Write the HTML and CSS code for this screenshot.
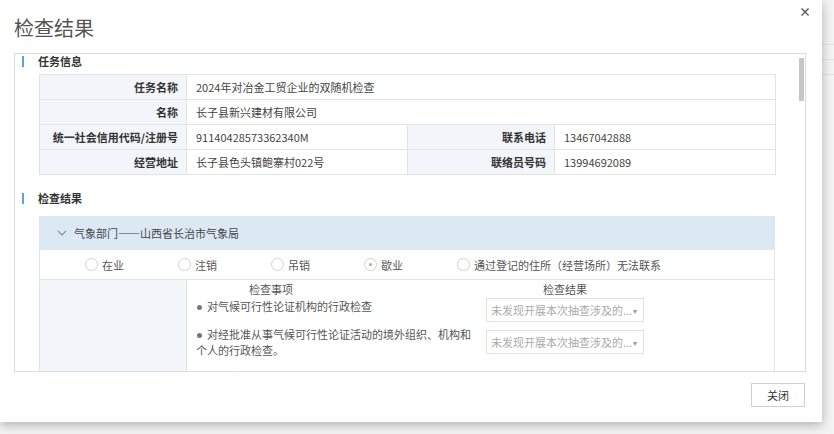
FILE: index.html
```html
<!DOCTYPE html>
<html lang="zh-CN">
  <head>
    <meta charset="UTF-8" />
    <meta name="viewport" content="width=device-width, initial-scale=1.0" />
    <title>检查结果</title>
    <link rel="stylesheet" href="styles.css">
  </head>
  <body>
    <div class="page-bg">
      <div class="bg-line"></div>
      <div class="bg-line"></div>
      <div class="bg-line"></div>
    </div>
    <div class="modal">
      <div class="modal-head">
        <h1 class="modal-title">检查结果</h1>
        <span class="modal-close">×</span>
      </div>
      <div class="modal-body">
        <div class="scroll-thumb"></div>
        <div class="section-title"><i class="bar"></i>任务信息</div>
        <table class="info">
          <colgroup>
            <col class="c-label" /><col class="c-value" /><col class="c-label" /><col class="c-value" />
          </colgroup>
          <tr>
            <th>任务名称</th>
            <td colspan="3">2024年对冶金工贸企业的双随机检查</td>
          </tr>
          <tr>
            <th>名称</th>
            <td colspan="3">长子县新兴建材有限公司</td>
          </tr>
          <tr>
            <th>统一社会信用代码/注册号</th>
            <td>91140428573362340M</td>
            <th>联系电话</th>
            <td>13467042888</td>
          </tr>
          <tr>
            <th>经营地址</th>
            <td>长子县色头镇鲍寨村022号</td>
            <th>联络员号码</th>
            <td>13994692089</td>
          </tr>
        </table>

        <div class="section-title second"><i class="bar"></i>检查结果</div>
        <div class="panel">
          <div class="panel-head">
            <svg class="chevron" width="10" height="6" viewBox="0 0 10 6"><path d="M1 1 L5 5 L9 1" fill="none" stroke="#8a8a8a" stroke-width="1.1"/></svg>
            <span>气象部门——山西省长治市气象局</span>
          </div>
          <div class="radios">
            <label class="radio"><i class="dot"></i>在业</label>
            <label class="radio"><i class="dot"></i>注销</label>
            <label class="radio"><i class="dot"></i>吊销</label>
            <label class="radio checked"><i class="dot"></i>歇业</label>
            <label class="radio"><i class="dot"></i>通过登记的住所（经营场所）无法联系</label>
          </div>
          <div class="check-row">
            <div class="check-label"></div>
            <div class="check-grid">
              <div class="col-head item-head">检查事项</div>
              <div class="col-head result-head">检查结果</div>
              <div class="item first"><i class="bullet"></i>对气候可行性论证机构的行政检查</div>
              <div class="select first"><span>未发现开展本次抽查涉及的...</span><b>▾</b></div>
              <div class="item"><i class="bullet"></i>对经批准从事气候可行性论证活动的境外组织、机构和个人的行政检查。</div>
              <div class="select"><span>未发现开展本次抽查涉及的...</span><b>▾</b></div>
            </div>
          </div>
        </div>
      </div>
      <div class="modal-foot">
        <button class="btn">关闭</button>
      </div>
    </div>
  </body>
</html>
```

FILE: styles.css
```css
* {
  margin: 0;
  padding: 0;
  box-sizing: border-box;
}

body {
  width: 834px;
  height: 434px;
  overflow: hidden;
  background-color: #f3f3f3;
  font-family: 'Noto Sans CJK SC', 'Microsoft Yahei', sans-serif;
  font-size: 11px;
  color: #444;
  position: relative;
}

/* 背后页面的一点残影 */
.page-bg {
  position: absolute;
  top: 0;
  right: 0;
  width: 12px;
  height: 434px;
  padding-top: 44px;
  display: flex;
  flex-direction: column;
  gap: 14px;
}

.bg-line {
  height: 1px;
  background-color: #e2e2e2;
}

.modal {
  position: relative;
  width: 822px;
  height: 422px;
  background-color: #fff;
  box-shadow: 0 3px 10px rgba(0, 0, 0, 0.28);
  display: flex;
  flex-direction: column;
}

.modal-head {
  height: 53px;
  display: flex;
  justify-content: space-between;
  align-items: flex-start;
  padding: 0 11px 0 14px;
}

.modal-title {
  margin-top: 15px;
  font-size: 20px;
  line-height: 26px;
  font-weight: normal;
  color: #555;
}

.modal-close {
  margin-top: 5px;
  font-size: 12px;
  line-height: 14px;
  font-weight: bold;
  color: #555;
}

.modal-body {
  position: relative;
  margin: 0 16px 0 14px;
  height: 319px;
  border: 1px solid #dcdcdc;
  overflow: hidden;
  padding: 0 30px 0 24px;
}

.scroll-thumb {
  position: absolute;
  right: 1px;
  top: 4px;
  width: 5px;
  height: 43px;
  background-color: #c6c6c6;
}

.section-title {
  display: flex;
  align-items: center;
  margin-left: -24px;
  height: 14px;
  line-height: 14px;
  margin-top: 0;
  margin-bottom: 6px;
  font-weight: bold;
  color: #333;
}

.section-title.second {
  margin-top: 16px;
  margin-bottom: 11px;
}

.bar {
  display: block;
  width: 2px;
  height: 11px;
  margin: 0 14px 0 7px;
  background-color: #5d9fe0;
}

.info {
  width: 736px;
  border-collapse: collapse;
  table-layout: fixed;
}

.c-label {
  width: 147px;
}

.c-value {
  width: 221px;
}

.info th,
.info td {
  height: 25px;
  border: 1px solid #e3e3e3;
  white-space: nowrap;
}

.info th {
  text-align: right;
  padding-right: 8px;
  background-color: #f2f5f9;
  color: #333;
}

.info td {
  padding-left: 9px;
  color: #444;
  font-weight: normal;
}

.panel {
  width: 736px;
  border: 1px solid #e3e3e3;
  border-top: none;
}

.panel-head {
  height: 34px;
  display: flex;
  align-items: center;
  margin: 0 -1px;
  padding-left: 18px;
  background-color: #dde8f5;
  color: #444;
}

.chevron {
  margin-right: 7px;
}

.radios {
  height: 30px;
  display: flex;
  align-items: center;
  padding-left: 45px;
  border-bottom: 1px solid #e3e3e3;
  color: #555;
}

.radio {
  width: 93px;
  display: flex;
  align-items: center;
}

.radio:last-child {
  width: auto;
}

.dot {
  width: 13px;
  height: 13px;
  margin-right: 4px;
  border: 1px solid #d3d3d3;
  border-radius: 50%;
  background-color: #fff;
  display: flex;
  justify-content: center;
  align-items: center;
}

.checked .dot::after {
  content: '';
  width: 3px;
  height: 3px;
  border-radius: 50%;
  background-color: #a7a7b5;
}

.check-row {
  display: flex;
  min-height: 120px;
}

.check-label {
  width: 147px;
  background-color: #f2f5f9;
  border-right: 1px solid #e3e3e3;
}

.check-grid {
  display: grid;
  grid-template-columns: 290px 158px;
  row-gap: 2px;
  align-content: start;
  padding: 2px 0 0 9px;
}

.col-head {
  line-height: 14px;
  color: #555;
}

.item-head {
  padding-left: 53px;
}

.result-head {
  text-align: center;
}

.item {
  line-height: 16px;
  padding-right: 10px;
  color: #555;
  align-self: center;
}

.bullet {
  display: inline-block;
  width: 5px;
  height: 5px;
  margin: 0 5px 1px 1px;
  border-radius: 50%;
  background-color: #777;
  vertical-align: middle;
}

.item.first {
  align-self: start;
  margin-bottom: 10px;
}

.select {
  height: 24px;
  border: 1px solid #e2e2e2;
  display: flex;
  align-items: center;
  justify-content: space-between;
  padding: 0 6px 0 4px;
  color: #aaa;
  align-self: center;
}

.select.first {
  align-self: start;
}

.select b {
  font-weight: normal;
  font-size: 8px;
  color: #999;
}

.modal-foot {
  display: flex;
  justify-content: flex-end;
  padding: 11px 17px 0 0;
}

.btn {
  width: 54px;
  height: 24px;
  border: 1px solid #cfcfcf;
  background-color: #fff;
  font-family: inherit;
  font-size: 11px;
  color: #333;
}
```
